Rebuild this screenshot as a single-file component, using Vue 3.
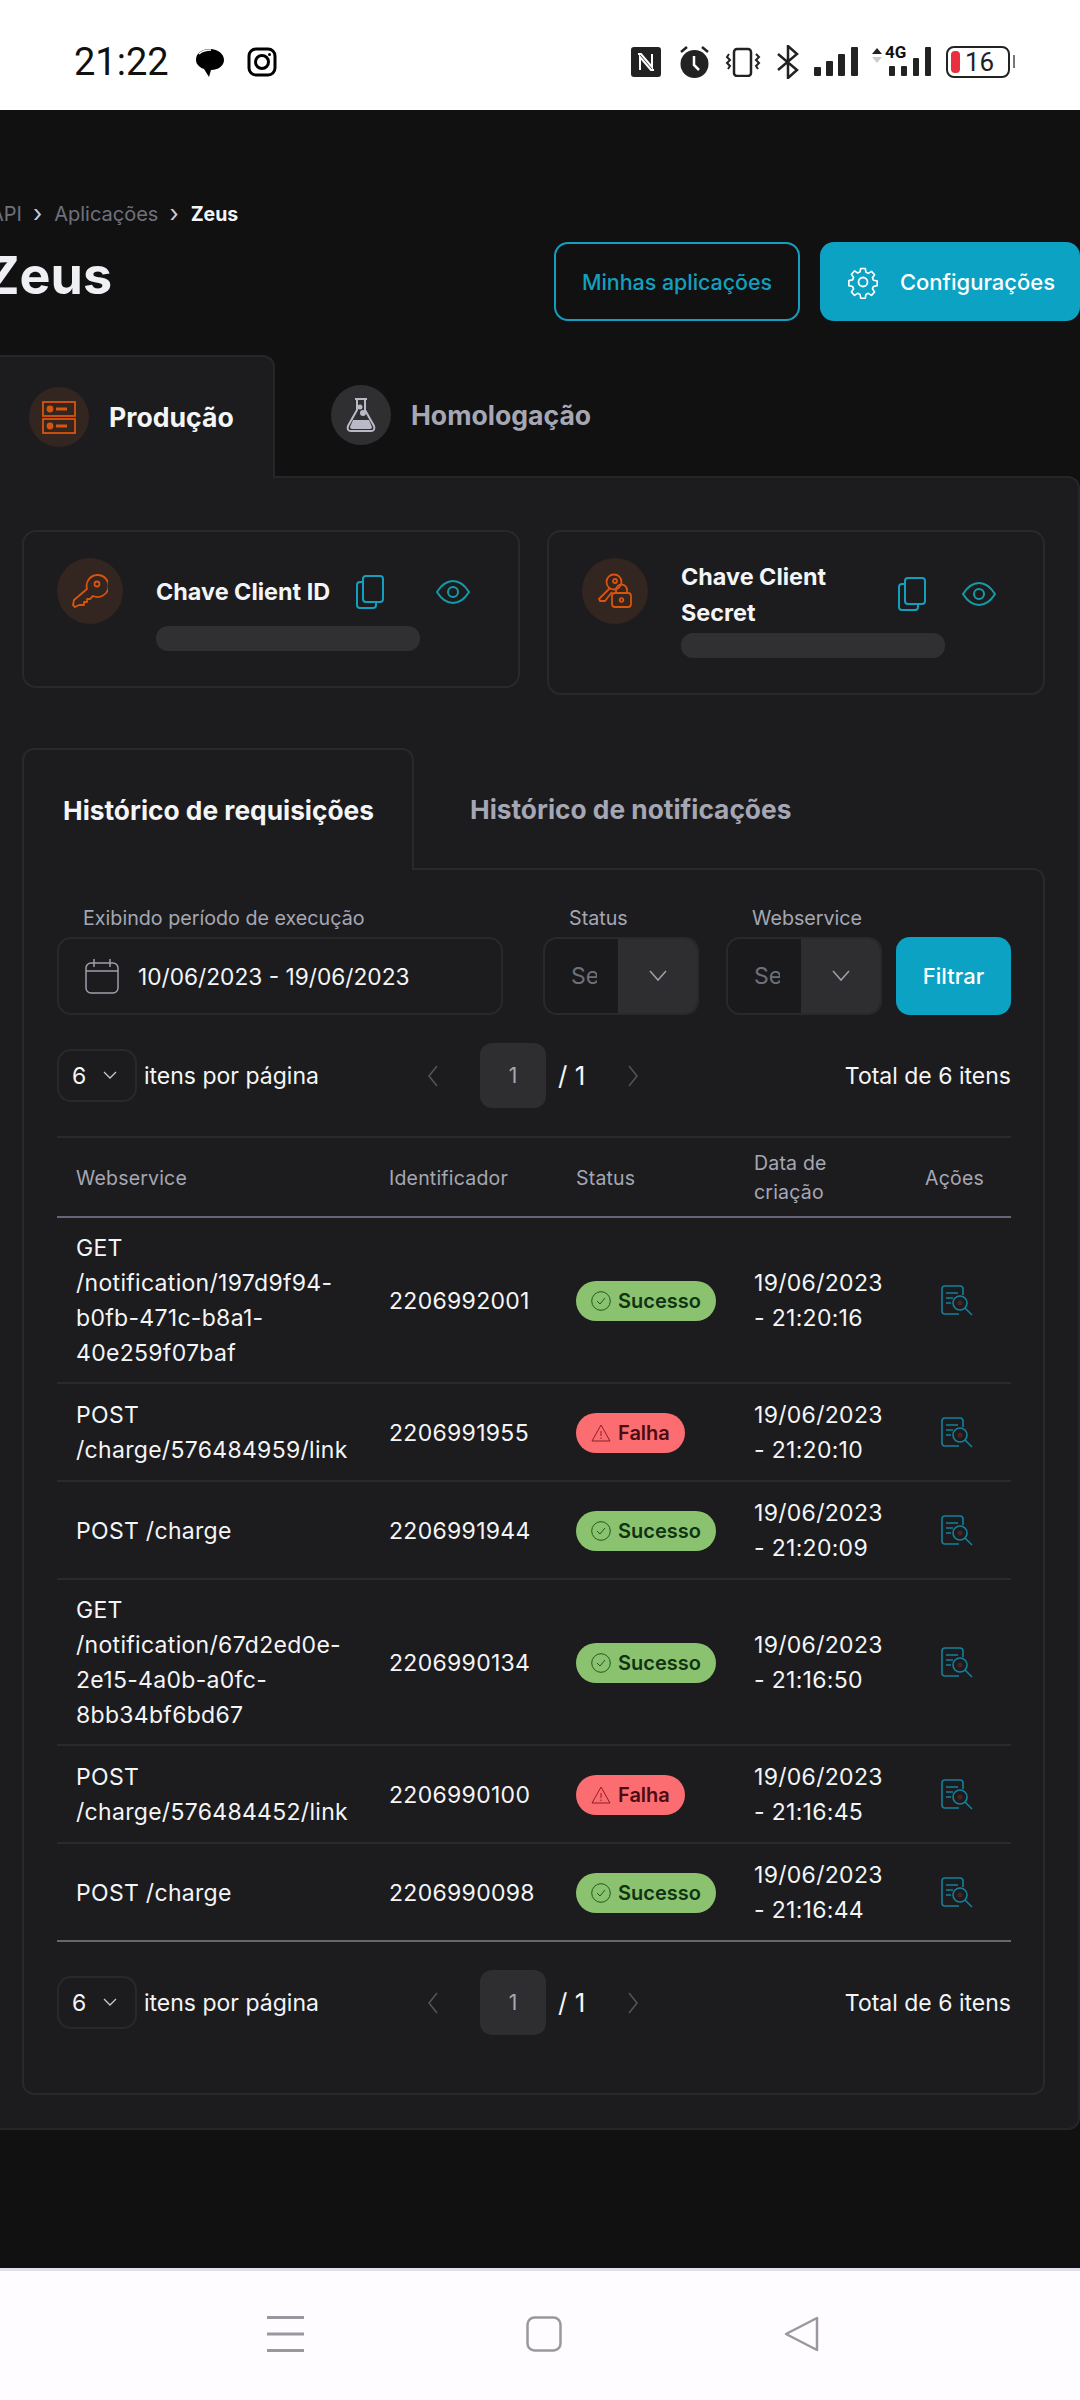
<template>
  <div class="app">
    <!-- barra de status -->
    <header class="status">
      <span class="status__time">21:22</span>
      <svg class="status__bubble" viewBox="0 0 30 30"><path d="M15 2C7 2 1 6 1 13c0 5 5 8 8 9l5 8 2-7c7 0 13-4 13-10S23 2 15 2z" fill="#000"/><path d="M4 7c3-3 7-4 12-4" stroke="#fff" stroke-width="1.6" fill="none"/></svg>
      <svg class="status__insta" viewBox="0 0 30 30" fill="none" stroke="#000" stroke-width="3"><rect x="2" y="2" width="26" height="26" rx="7"/><circle cx="15" cy="15" r="6.5"/><circle cx="22.5" cy="7.5" r="1.5" fill="#000" stroke="none"/></svg>
      <div class="status__right">
        <svg width="34" height="32" viewBox="0 0 34 32"><rect x="0" y="1" width="30" height="30" rx="3" fill="#222"/><path d="M7 8h3l11 13V8M23 24h-3L9 11v13" stroke="#fff" stroke-width="2" fill="none"/></svg>
        <svg width="32" height="34" viewBox="0 0 32 34"><circle cx="15.500" cy="19" r="14" fill="#222"/><path d="M15 11v9l5 5" stroke="#fff" stroke-width="2.500" fill="none"/><path d="M2 7l6-5M29 7l-6-5" stroke="#222" stroke-width="2.500"/></svg>
        <svg width="37" height="30" viewBox="0 0 37 30" fill="none" stroke="#222" stroke-width="2"><rect x="9" y="2" width="17" height="27" rx="3" stroke-width="2.500"/><path d="M4 7l-2 3 3 3-3 3 3 3-2 3M31 7l3 3-3 3 3 3-3 3 2 3"/></svg>
        <svg width="24" height="34" viewBox="0 0 24 34" fill="none" stroke="#222" stroke-width="2.500"><path d="M2 9l19 16-9 8V1l9 8L2 25"/></svg>
        <svg width="44" height="32" viewBox="0 0 44 32" fill="#222"><rect x="0" y="21" width="7" height="9" rx="1"/><rect x="12" y="15" width="7" height="15" rx="1"/><rect x="24" y="8" width="7" height="22" rx="1"/><rect x="37" y="1" width="7" height="29" rx="1"/></svg>
        <div class="status__lte">
          <svg width="60" height="32" viewBox="0 0 60 32" fill="#222"><path d="M0 8l5-6 5 6z"/><path d="M0 11l5 6 5-6z" fill="#ccc"/><rect x="17" y="20" width="6" height="10" rx="1"/><rect x="29" y="20" width="6" height="10" rx="1"/><rect x="41" y="12" width="6" height="18" rx="1"/><rect x="53" y="1" width="6" height="29" rx="1"/></svg>
          <span class="status__4g">4G</span>
        </div>
        <div class="status__battery">
          <span class="status__battery-level"></span>
          <span class="status__battery-text">16</span>
        </div>
      </div>
    </header>

    <main class="main">
      <nav class="crumbs">
        <span>API</span><i class="crumbs__sep">›</i><span>Aplicações</span><i class="crumbs__sep">›</i><b>Zeus</b>
      </nav>

      <div class="head">
        <h1 class="head__title">Zeus</h1>
        <button class="btn btn--outline">Minhas aplicações</button>
        <button class="btn btn--solid">
          <svg width="36" height="36" viewBox="0 0 24 24" fill="none" stroke="#fff" stroke-width="1.200" stroke-linejoin="round"><circle cx="12" cy="12" r="3"/><path d="M10.300 2h3.400l.5 2.800 1.700.8 2.400-1.500 2.300 2.500-1.600 2.300.7 1.800 2.800.6v3.400l-2.800.6-.7 1.800 1.600 2.300-2.300 2.500-2.400-1.500-1.700.8-.5 2.800h-3.400l-.5-2.800-1.700-.8-2.400 1.500-2.300-2.500 1.600-2.300-.7-1.800-2.800-.6V11l2.800-.6.700-1.800-1.600-2.300 2.300-2.500 2.400 1.500 1.700-.8z" transform="translate(1.200 1.200) scale(.9)"/></svg>
          Configurações
        </button>
      </div>

      <div class="env-tabs">
        <div class="env-tab env-tab--active">
          <span class="circle circle--orange">
            <svg width="36" height="36" viewBox="0 0 36 36" fill="none" stroke="#d9540f" stroke-width="1.800"><rect x="2" y="3" width="32" height="14"/><rect x="2" y="20" width="32" height="14"/><circle cx="9" cy="10" r="2.500" fill="#d9540f"/><circle cx="9" cy="27" r="2.500" fill="#d9540f"/><path d="M15 10h11M15 27h11" stroke-width="3"/></svg>
          </span>
          Produção
        </div>
        <div class="env-tab">
          <span class="circle circle--grey">
            <svg width="32" height="36" viewBox="0 0 32 36" fill="none" stroke="#b9bac6" stroke-width="2"><path d="M10 2h12M12 2v11L3 29c-1 3 0 5 3 5h20c3 0 4-2 3-5l-9-16V2"/><path d="M8 23h16l3 7c0 1-1 2-2 2H7c-1 0-2-1-2-2z" fill="#b9bac6" stroke="none"/><circle cx="15" cy="10" r="1.500" fill="#b9bac6"/><circle cx="18" cy="16" r="2" fill="#b9bac6"/></svg>
          </span>
          Homologação
        </div>
      </div>

      <section class="panel">
        <div class="keys">
          <article class="key">
            <span class="circle circle--orange circle--big">
              <svg width="36" height="36" viewBox="0 0 36 36" fill="none" stroke="#d9540f" stroke-width="1.800" stroke-linejoin="round"><path d="M15 16A11 11 0 1 1 21 23l-3 3h-3v3h-3v3H7l-4 2-2-2 1-5z"/><circle cx="25" cy="11" r="2.500"/></svg>
            </span>
            <div class="key__body">
              <div class="key__head">
                <h3 class="key__title">Chave Client ID</h3>
                <svg class="key__copy" width="28" height="34" viewBox="0 0 28 34" fill="none" stroke="#149fbe" stroke-width="2"><rect x="7" y="1" width="20" height="26" rx="3"/><path d="M7 7H4a3 3 0 0 0-3 3v20a3 3 0 0 0 3 3h13a3 3 0 0 0 3-3v-3"/></svg>
                <svg class="key__eye" width="34" height="24" viewBox="0 0 34 24" fill="none" stroke="#149ba8" stroke-width="2"><path d="M1 12C6 4 11 1 17 1s11 3 16 11c-5 8-10 11-16 11S6 20 1 12z"/><circle cx="17" cy="12" r="5"/></svg>
              </div>
              <div class="key__mask"></div>
            </div>
          </article>
          <article class="key key--tall">
            <span class="circle circle--orange circle--big">
              <svg width="36" height="36" viewBox="0 0 36 36" fill="none" stroke="#d9540f" stroke-width="1.800"><circle cx="17" cy="9" r="7.500"/><circle cx="18" cy="8" r="2"/><path d="M13 15L2 26l1 2h5l7-9"/><rect x="15" y="20" width="19" height="14" rx="3"/><path d="M19 20v-3a5.500 5.500 0 0 1 11 0v3"/><circle cx="24.500" cy="27" r="1.800"/></svg>
            </span>
            <div class="key__body">
              <div class="key__head">
                <h3 class="key__title key__title--wrap">Chave Client<br>Secret</h3>
                <svg class="key__copy" width="28" height="34" viewBox="0 0 28 34" fill="none" stroke="#149fbe" stroke-width="2"><rect x="7" y="1" width="20" height="26" rx="3"/><path d="M7 7H4a3 3 0 0 0-3 3v20a3 3 0 0 0 3 3h13a3 3 0 0 0 3-3v-3"/></svg>
                <svg class="key__eye" width="34" height="24" viewBox="0 0 34 24" fill="none" stroke="#149ba8" stroke-width="2"><path d="M1 12C6 4 11 1 17 1s11 3 16 11c-5 8-10 11-16 11S6 20 1 12z"/><circle cx="17" cy="12" r="5"/></svg>
              </div>
              <div class="key__mask"></div>
            </div>
          </article>
        </div>

        <div class="hist-tabs">
          <div class="hist-tab hist-tab--active">Histórico de requisições</div>
          <div class="hist-tab">Histórico de notificações</div>
        </div>

        <div class="hist">
          <div class="filters">
            <div class="field field--date">
              <label class="field__label">Exibindo período de execução</label>
              <div class="field__box">
                <svg width="34" height="36" viewBox="0 0 34 36" fill="none" stroke="#9d9fab" stroke-width="1.500"><rect x="1" y="5" width="32" height="30" rx="5"/><path d="M1 13h32M9 1v8M25 1v8"/></svg>
                <span class="field__value">10/06/2023 - 19/06/2023</span>
              </div>
            </div>
            <div v-for="name in ['Status', 'Webservice']" :key="name" class="field field--select">
              <label class="field__label">{{ name }}</label>
              <div class="field__box">
                <span class="field__placeholder">Selecione</span>
                <span class="field__arrow">
                  <svg width="18" height="12" viewBox="0 0 18 12" fill="none" stroke="#9d9fab" stroke-width="1.500"><path d="M1 1l8 9 8-9"/></svg>
                </span>
              </div>
            </div>
            <button class="btn btn--solid btn--filter">Filtrar</button>
          </div>

          <div class="pager">
            <div class="pager__left">
              <div class="pager__size">6
                <svg width="14" height="9" viewBox="0 0 14 9" fill="none" stroke="#c8c9d0" stroke-width="1.300"><path d="M1 1l6 6 6-6"/></svg>
              </div>
              itens por página
            </div>
            <svg width="11" height="22" viewBox="0 0 11 22" fill="none" stroke="#55565c" stroke-width="1.500"><path d="M10 1L2 11l8 10"/></svg>
            <span class="pager__page">1</span>
            <span class="pager__of">/ 1</span>
            <svg class="pager__next" width="11" height="22" viewBox="0 0 11 22" fill="none" stroke="#55565c" stroke-width="1.500"><path d="M1 1l8 10-8 10"/></svg>
            <span class="pager__total">Total de 6 itens</span>
          </div>

          <table class="grid">
            <colgroup>
              <col style="width: 313px"><col style="width: 187px"><col style="width: 178px"><col style="width: 171px"><col style="width: 105px">
            </colgroup>
            <thead>
              <tr>
                <th>Webservice</th>
                <th>Identificador</th>
                <th>Status</th>
                <th>Data de<br>criação</th>
                <th>Ações</th>
              </tr>
            </thead>
            <tbody>
              <tr v-for="row in rows" :key="row.id">
                <td><div v-for="line in row.service" :key="line">{{ line }}</div></td>
                <td>{{ row.id }}</td>
                <td>
                  <span class="badge" :class="row.ok ? 'badge--ok' : 'badge--fail'">
                    <svg v-if="row.ok" width="20" height="20" viewBox="0 0 20 20" fill="none" stroke="#1f5a1c" stroke-width="1"><circle cx="10" cy="10" r="9.300"/><path d="M6 10l3 3 5-6"/></svg>
                    <svg v-else width="20" height="20" viewBox="0 0 20 20" fill="none" stroke="#8f1f26" stroke-width="1"><path d="M10 2l9 16H1z"/><path d="M10 8v5M10 14.500v1.500"/></svg>
                    {{ row.ok ? 'Sucesso' : 'Falha' }}
                  </span>
                </td>
                <td>{{ row.date }}<br>- {{ row.time }}</td>
                <td class="grid__action">
                  <svg width="32" height="32" viewBox="0 0 32 32" fill="none" stroke="#16809c" stroke-width="1.600"><path d="M22 10V4a3 3 0 0 0-3-3H4a3 3 0 0 0-3 3v22a3 3 0 0 0 3 3h14"/><path d="M5 8h12M5 13h7M5 18h5"/><circle cx="19" cy="18" r="7"/><path d="M24 23l7 7"/><circle cx="19" cy="18" r="2.500" fill="#7a2a2a" stroke="none" opacity=".5"/></svg>
                </td>
              </tr>
            </tbody>
          </table>

          <div class="pager">
            <div class="pager__left">
              <div class="pager__size">6
                <svg width="14" height="9" viewBox="0 0 14 9" fill="none" stroke="#c8c9d0" stroke-width="1.300"><path d="M1 1l6 6 6-6"/></svg>
              </div>
              itens por página
            </div>
            <svg width="11" height="22" viewBox="0 0 11 22" fill="none" stroke="#55565c" stroke-width="1.500"><path d="M10 1L2 11l8 10"/></svg>
            <span class="pager__page">1</span>
            <span class="pager__of">/ 1</span>
            <svg class="pager__next" width="11" height="22" viewBox="0 0 11 22" fill="none" stroke="#55565c" stroke-width="1.500"><path d="M1 1l8 10-8 10"/></svg>
            <span class="pager__total">Total de 6 itens</span>
          </div>
        </div>
      </section>
    </main>

    <!-- navegação do sistema -->
    <footer class="sysnav">
      <svg width="37" height="36" viewBox="0 0 37 36" fill="#9a979e"><rect y="0" width="37" height="3"/><rect y="16.500" width="37" height="3"/><rect y="33" width="37" height="3"/></svg>
      <svg width="36" height="36" viewBox="0 0 36 36" fill="none" stroke="#9a979e" stroke-width="2.500"><rect x="1.500" y="1.500" width="33" height="33" rx="7"/></svg>
      <svg width="35" height="36" viewBox="0 0 35 36" fill="none" stroke="#9a979e" stroke-width="2.500" stroke-linejoin="round"><path d="M33 2v32L2 18z"/></svg>
    </footer>
  </div>
</template>

<script setup>
// dados da tabela de requisições
const rows = [
  { service: ['GET', '/notification/197d9f94-', 'b0fb-471c-b8a1-', '40e259f07baf'], id: '2206992001', ok: true, date: '19/06/2023', time: '21:20:16' },
  { service: ['POST', '/charge/576484959/link'], id: '2206991955', ok: false, date: '19/06/2023', time: '21:20:10' },
  { service: ['POST /charge'], id: '2206991944', ok: true, date: '19/06/2023', time: '21:20:09' },
  { service: ['GET', '/notification/67d2ed0e-', '2e15-4a0b-a0fc-', '8bb34bf6bd67'], id: '2206990134', ok: true, date: '19/06/2023', time: '21:16:50' },
  { service: ['POST', '/charge/576484452/link'], id: '2206990100', ok: false, date: '19/06/2023', time: '21:16:45' },
  { service: ['POST /charge'], id: '2206990098', ok: true, date: '19/06/2023', time: '21:16:44' },
];
</script>

<style>
body { background: #111112; }
</style>

<style scoped>
.app {
  width: 1080px;
  height: 2400px;
  display: flex;
  flex-direction: column;
  overflow: hidden;
  font-family: Inter, "Noto Sans", sans-serif;
  color: #f4f5f7;
}

/* status bar */
.status {
  height: 110px;
  flex: none;
  box-sizing: border-box;
  background: #fff;
  display: flex;
  align-items: center;
  padding: 14px 66px 0 74px;
  color: #111;
  font-family: Roboto, sans-serif;
}
.status__time { font-size: 38px; width: 121px; }
.status__bubble { width: 30px; height: 30px; margin-right: 22px; }
.status__insta { width: 30px; height: 30px; }
.status__right { margin-left: auto; display: flex; align-items: center; gap: 14px; }
.status__lte { display: flex; width: 60px; height: 32px; position: relative; }
.status__4g {
  position: absolute;
  left: 13px;
  top: -3px;
  font-size: 17px;
  font-weight: 700;
  background: #fff;
  line-height: 18px;
  padding-right: 1px;
}
.status__battery {
  width: 64px;
  height: 32px;
  border: 2.500px solid #222;
  border-radius: 8px;
  box-sizing: border-box;
  margin-right: 4px;
  display: flex;
  align-items: center;
  padding-left: 3px;
  gap: 5px;
  position: relative;
}
.status__battery::after {
  content: "";
  position: absolute;
  right: -7px;
  top: 7px;
  width: 2px;
  height: 13px;
  background: #777;
}
.status__battery-level { width: 9px; height: 22px; border-radius: 4px; background: #e8303f; }
.status__battery-text { font-size: 26px; line-height: 1; color: #222; }

/* main */
.main {
  flex: 1;
  background: #111112;
  padding-top: 92px;
}
.crumbs {
  display: flex;
  align-items: center;
  height: 24px;
  margin-left: -10px;
  font-size: 20px;
  color: #6f717c;
}
.crumbs__sep { font-style: normal; color: #c9cad2; margin: 0 12px 0 11px; font-size: 24px; line-height: 20px; }
.crumbs b { color: #f4f5f7; font-weight: 700; font-size: 19.500px; }

.head {
  display: flex;
  align-items: flex-start;
  margin-top: 16px;
  gap: 20px;
  height: 113px;
}
.head__title {
  margin: 0 auto 0 -15px;
  font-size: 52px;
  line-height: 68px;
  font-weight: 700;
  color: #eef0f4;
}
.btn {
  height: 79px;
  border-radius: 14px;
  font-family: inherit;
  font-size: 22px;
  font-weight: 500;
  display: flex;
  align-items: center;
  justify-content: center;
  box-sizing: border-box;
}
.btn--outline {
  width: 246px;
  background: transparent;
  border: 2px solid #149fbe;
  color: #149fbe;
  font-size: 21.400px;
}
.btn--solid {
  width: 260px;
  gap: 19px;
  background: #0ba2c4;
  border: 0;
  color: #fff;
}
.btn--filter { width: 115px; height: 78px; }

/* env tabs */
.env-tabs { display: flex; height: 121px; }
.env-tab {
  display: flex;
  align-items: center;
  gap: 20px;
  padding: 0 0 2px 56px;
  font-size: 26.600px;
  font-weight: 700;
  color: #a5a7b4;
  box-sizing: border-box;
}
.env-tab--active {
  width: 275px;
  padding-left: 29px;
  background: #1c1c1e;
  border: 2px solid #262628;
  border-left: 0;
  border-bottom: 0;
  border-radius: 0 12px 0 0;
  color: #f4f5f7;
  position: relative;
  z-index: 1;
  margin-bottom: -2px;
}
.circle {
  width: 60px;
  height: 60px;
  border-radius: 50%;
  display: flex;
  align-items: center;
  justify-content: center;
  flex: none;
}
.circle--orange { background: #33251f; }
.circle--grey { background: #2f2f31; }
.circle--big { width: 66px; height: 66px; }

.panel {
  background: #1c1c1e;
  border: 2px solid #262628;
  border-left: 0;
  border-radius: 0 12px 12px 0;
  padding: 52px 33px 33px 22px;
  height: 1654px;
  box-sizing: border-box;
}

/* keys */
.keys { display: flex; gap: 27px; align-items: flex-start; height: 165px; }
.key {
  flex: 0 0 498px;
  height: 158px;
  box-sizing: border-box;
  border: 2px solid #29292b;
  border-radius: 14px;
  padding: 26px 0 0 33px;
  display: flex;
  gap: 33px;
}
.key--tall { height: 165px; }
.key__body { flex: 1; }
.key__head { display: flex; align-items: center; height: 68px; }
.key__title {
  margin: 0;
  width: 200px;
  font-size: 23.400px;
  font-weight: 700;
  line-height: 36px;
  white-space: nowrap;
}
.key__copy { margin-left: 0; }
.key__eye { margin-left: 52px; }
.key--tall .key__head { height: 72px; margin-bottom: 3px; }
.key--tall .key__title { width: 217px; padding-top: 2px; }
.key--tall .key__eye { margin-left: 36px; }
.key__mask { width: 264px; height: 25px; border-radius: 12px; background: #303032; }

/* history tabs */
.hist-tabs { display: flex; margin-top: 53px; height: 120px; }
.hist-tab {
  display: flex;
  align-items: center;
  font-size: 26.300px;
  font-weight: 700;
  color: #a5a7b4;
  padding: 2px 0 0 56px;
}
.hist-tab--active {
  width: 392px;
  box-sizing: border-box;
  padding: 0 0 0 39px;
  color: #f4f5f7;
  background: #1c1c1e;
  border: 2px solid #29292b;
  border-bottom: 0;
  border-radius: 12px 12px 0 0;
  position: relative;
  z-index: 1;
  margin-bottom: -2px;
}

.hist {
  width: 1023px;
  height: 1227px;
  box-sizing: border-box;
  border: 2px solid #29292b;
  border-radius: 0 12px 12px 12px;
  padding: 36px 32px 0 33px;
}

/* filtros */
.filters { display: flex; align-items: flex-end; }
.field__label {
  display: block;
  padding-left: 26px;
  font-size: 19.700px;
  line-height: 24px;
  color: #a5a7b4;
  margin-bottom: 7px;
  white-space: nowrap;
}
.field__box {
  height: 78px;
  box-sizing: border-box;
  border: 2px solid #29292b;
  border-radius: 14px;
  display: flex;
  align-items: center;
  overflow: hidden;
}
.field--date { width: 446px; }
.field--date .field__box { padding-left: 26px; gap: 19px; }
.field__value { font-size: 22.700px; }
.field--select { width: 156px; margin-left: 40px; }
.field--select + .field--select { margin-left: 27px; }
.field--select .field__box { background: #1a1a1c; }
.field__placeholder {
  width: 26px;
  flex: none;
  margin: 0 21px 0 26px;
  font-size: 23px;
  color: #6e6f78;
  overflow: hidden;
  white-space: nowrap;
}
.field__arrow {
  flex: 1;
  align-self: stretch;
  background: #2e2e30;
  display: flex;
  align-items: center;
  justify-content: center;
}
.filters .btn--filter { margin-left: 14px; }

/* paginação */
.pager {
  display: flex;
  align-items: center;
  height: 65px;
  margin-top: 28px;
  font-size: 23px;
}
.pager__left { width: 370px; display: flex; align-items: center; gap: 7px; }
.pager__size {
  width: 80px;
  height: 53px;
  box-sizing: border-box;
  border: 2px solid #29292b;
  border-radius: 14px;
  display: flex;
  align-items: center;
  justify-content: space-between;
  padding: 0 18px 0 13px;
}
.pager__page {
  width: 66px;
  height: 65px;
  margin-left: 42px;
  border-radius: 12px;
  background: #2e2e30;
  color: #a5a7b4;
  display: flex;
  align-items: center;
  justify-content: center;
  font-size: 21px;
}
.pager__of { margin-left: 12px; width: 48px; font-size: 26px; }
.pager__next { margin-left: 22px; }
.pager__total { margin-left: auto; }

/* tabela */
.grid {
  width: 954px;
  table-layout: fixed;
  border-collapse: collapse;
  margin-top: 28px;
  font-size: 23px;
  letter-spacing: .3px;
  line-height: 35px;
}
.grid th {
  height: 80px;
  padding: 2px 0 0 19px;
  text-align: left;
  font-size: 19.500px;
  letter-spacing: .2px;
  font-weight: 400;
  line-height: 29px;
  color: #a5a7b4;
  border-top: 2px solid #2a2a2c;
  border-bottom: 2px solid #66667a;
  box-sizing: border-box;
}
.grid td {
  height: 98px;
  box-sizing: border-box;
  padding: 13px 0 11px 19px;
  border-bottom: 2px solid #2a2a2c;
  white-space: nowrap;
}
.grid tbody tr:last-child td { border-bottom: 2px solid #66676d; }
.grid__action svg { display: block; margin-left: 16px; }
.badge {
  display: inline-flex;
  align-items: center;
  vertical-align: middle;
  gap: 7px;
  height: 40px;
  padding: 0 15px;
  border-radius: 20px;
  font-size: 20px;
  font-weight: 600;
  letter-spacing: 0;
}
.badge--ok { background: #8ac26f; color: #123312; }
.badge--fail { background: #fb6d70; color: #4d0b12; }

/* system nav */
.sysnav {
  height: 132px;
  flex: none;
  box-sizing: border-box;
  background: #fefcff;
  border-top: 3px solid #e0e0e8;
  display: flex;
  align-items: center;
  justify-content: space-between;
  padding: 0 261px 3px 267px;
}
</style>
